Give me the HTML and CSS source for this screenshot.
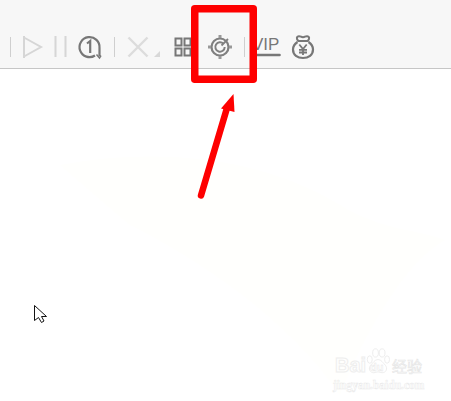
FILE: index.html
```html
<!DOCTYPE html>
<html lang="zh">
<head>
<meta charset="utf-8">
<title>Toolbar</title>
<link rel="stylesheet" href="styles.css">
</head>
<body>
<div class="page">
  <header class="toolbar">
    <span class="sep sep-a"></span>
    <svg class="ico play" viewBox="0 0 20 24"><path d="M2 1v22M2 2.500l17 9.500-17 9.500" fill="none" stroke="#d6d6d6" stroke-width="2"/></svg>
    <svg class="ico pause" viewBox="0 0 14 24"><path d="M1.500 1v21M11.500 1v21" fill="none" stroke="#d6d6d6" stroke-width="2"/></svg>
    <svg class="ico repeat" viewBox="0 0 24 24"><path d="M17 20.500A10 10 0 1 1 21.500 13V21" fill="none" stroke="#777" stroke-width="2.200"/><path d="M18.500 19.500l3 3.500 1.500-2.500" fill="none" stroke="#777" stroke-width="1.500"/><path d="M9 8.500l3.200-2.500V18" fill="none" stroke="#777" stroke-width="2.200"/></svg>
    <span class="sep sep-b"></span>
    <svg class="ico close" viewBox="0 0 22 24"><path d="M1.500 2.500l19 19M20.500 2.500l-19 19" fill="none" stroke="#dcdcdc" stroke-width="2.400"/></svg>
    <svg class="ico drop" viewBox="0 0 8 24"><path d="M7 16v6H1z" fill="#d8d8d8"/></svg>
    <svg class="ico grid" viewBox="0 0 18 24"><path d="M1.500 3.500h6v7h-6zM10.500 3.500h6v7h-6zM1.500 13.500h6v7h-6zM10.500 13.500h6v7h-6z" fill="none" stroke="#777" stroke-width="2"/></svg>
    <svg class="ico target" viewBox="0 0 24 24"><circle cx="12" cy="12" r="8.500" fill="none" stroke="#808080" stroke-width="2.200"/><path d="M15.500 8.800A4.700 4.700 0 1 0 16.700 12" fill="none" stroke="#808080" stroke-width="2"/><path d="M13.500 10.500L20 4" stroke="#808080" stroke-width="1.800"/><path d="M10.500 0h3v3h-3zM10.500 21h3v3h-3zM0 10.500h3v3H0zM21 10.500h3v3h-3z" fill="#999"/></svg>
    <span class="sep sep-c"></span>
    <svg class="ico vip" viewBox="0 0 30 24"><text class="vip-text" x="1" y="15">VIP</text><path d="M2 20h26.500" stroke="#777" stroke-width="2.600" stroke-linecap="round"/></svg>
    <svg class="ico bag" viewBox="0 0 24 24"><path d="M7.500 6C5 4 5.500 1.200 8 1.200c2 0 2 1 4 1s2-1 4-1c2.500 0 3 2.800.5 4.800" fill="none" stroke="#777" stroke-width="2"/><path d="M6.500 6h11" stroke="#777" stroke-width="2"/><path d="M6.500 7C3.500 9 2 11.500 2 14.500 2 20 6.500 23 12 23s10-3 10-8.500c0-3-1.500-5.500-4.500-7.500" fill="none" stroke="#777" stroke-width="2.200"/><path d="M8.300 9.500L12 14l3.700-4.500M12 14v6M8 14.800h8M8 17.500h8" fill="none" stroke="#777" stroke-width="1.800"/></svg>
  </header>
  <main class="canvas"></main>

  <svg class="overlay" viewBox="0 0 451 401">
    <path d="M60 165C140 150 250 150 340 205C380 230 420 230 445 240C400 265 360 345 340 395C290 320 200 260 130 225Z" fill="#fffffd"/>
    <rect class="callout" x="194.750" y="8.750" width="58.500" height="70.500"/>
    <path d="M201 195.500L227 108" fill="none" stroke="#fe0000" stroke-width="6.500" stroke-linecap="round"/>
    <path d="M233.500 94L234.500 112L221 108.500Z" fill="#fe0000"/>
    <path d="M34.500 305.500V320.500L38.500 317.500L41.500 322.500L44 321L41.500 316.500H46.500Z" fill="#fff" stroke="#111" stroke-width="1"/>
  </svg>

  <div class="mark">
    <div class="mark-top">
      <span class="mark-bai">Bai</span>
      <span class="mark-paw">
        <svg class="paw" viewBox="0 0 30 34"><ellipse cx="5" cy="14" rx="3" ry="4.500"/><ellipse cx="12" cy="6" rx="3.500" ry="5"/><ellipse cx="20" cy="6" rx="3.500" ry="5"/><ellipse cx="26" cy="14" rx="3" ry="4.500"/><path d="M15 14c4 0 6 4 9 7 3 4 1 9-4 9-2 0-3-1-5-1s-3 1-5 1c-5 0-7-5-4-9 3-3 5-7 9-7z"/></svg>
        <span class="mark-du">du</span>
      </span>
      <span class="mark-cn">经验</span>
    </div>
    <div class="mark-url">jingyan.baidu.com</div>
  </div>
</div>
</body>
</html>
```
FILE: styles.css
```css
html, body {
  margin: 0;
  padding: 0;
  background: #fff;
}
.page {
  position: relative;
  width: 451px;
  height: 401px;
  overflow: hidden;
  font-family: "Liberation Sans", sans-serif;
}
.toolbar {
  display: flex;
  align-items: center;
  box-sizing: border-box;
  height: 69px;
  padding: 26px 0 0 10px;
  background: #f7f7f7;
  border-bottom: 1px solid #c6c6c6;
}
.canvas {
  height: 332px;
  background: #fff;
}
.sep {
  flex: none;
  width: 1px;
  height: 20px;
  background: #cfcfcf;
}
.ico {
  flex: none;
  height: 24px;
  display: block;
  overflow: visible;
}
.play { width: 20px; margin-left: 11px; }
.pause { width: 14px; margin-left: 12px; }
.repeat { width: 24px; margin-left: 10px; }
.sep-b { margin-left: 12px; }
.close { width: 22px; margin-left: 12px; }
.drop { width: 8px; margin-left: 4px; }
.grid { width: 18px; margin-left: 13px; }
.target { width: 24px; margin-left: 16px; }
.sep-c { margin-left: 12px; }
.vip { width: 30px; margin-left: 6px; }
.bag { width: 24px; margin-left: 10px; }
.vip-text {
  font-family: "Liberation Sans", sans-serif;
  font-size: 17px;
  fill: #777;
}
.overlay {
  position: absolute;
  left: 0;
  top: 0;
  width: 451px;
  height: 401px;
}
.callout {
  fill: none;
  stroke: #fe0000;
  stroke-width: 7.5px;
  stroke-linejoin: round;
}
.mark {
  position: absolute;
  left: 335px;
  top: 348px;
  width: 116px;
  color: #fff;
  opacity: 0.6;
}
.mark-top {
  display: flex;
  align-items: flex-end;
  height: 28px;
}
.mark-bai {
  width: 30px;
  font-size: 20px;
  font-weight: 700;
  line-height: 22px;
  -webkit-text-stroke: 1px #e4e4e4;
}
.mark-paw {
  position: relative;
  width: 26px;
  height: 28px;
  margin-right: 1px;
}
.paw {
  display: block;
  width: 26px;
  height: 28px;
  fill: #fff;
  stroke: #ddd;
  stroke-width: 1;
}
.mark-du {
  position: absolute;
  left: 5px;
  top: 13px;
  font-size: 11px;
  font-weight: 700;
  line-height: 12px;
  -webkit-text-stroke: 0.5px #d8d8d8;
}
.mark-cn {
  font-family: "Noto Sans CJK SC", sans-serif;
  font-size: 15px;
  line-height: 20px;
  -webkit-text-stroke: 0.7px #d8d8d8;
}
.mark-url {
  margin: 3px 0 0 -2px;
  font-family: "Liberation Serif", serif;
  font-size: 11.5px;
  font-weight: 700;
  line-height: 12px;
  -webkit-text-stroke: 0.5px #dcdcdc;
}
```
